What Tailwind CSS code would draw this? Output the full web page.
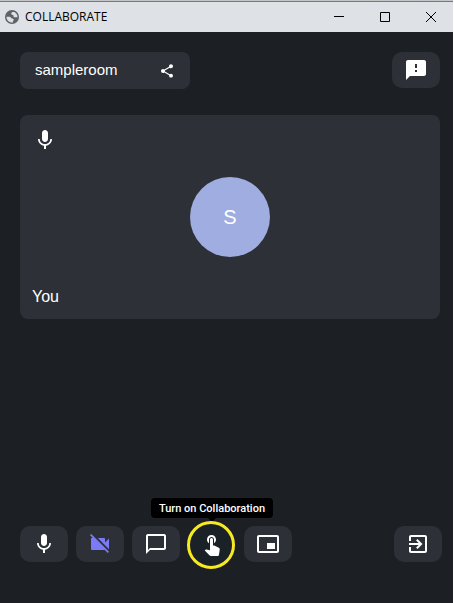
<!DOCTYPE html>
<html lang="en">
<head>
  <meta charset="UTF-8">
  <meta name="viewport" content="width=device-width, initial-scale=1.0">
  <title>COLLABORATE</title>
  <script src="https://cdn.jsdelivr.net/npm/@tailwindcss/browser@4"></script>
</head>
<body class="relative flex min-h-screen flex-col bg-[#1c1f24] font-['Liberation_Sans',Arial,sans-serif] text-white">
  <div class="absolute inset-y-0 right-0 w-px bg-white"></div>

  <!-- Title bar -->
  <header class="flex h-8 items-center border-t border-[#c4c6c8] bg-[#dee1e6] text-black shadow-[inset_0_1px_0_#77797c]">
    <svg class="ml-1 size-4" viewBox="0 0 16 16">
      <circle cx="8" cy="8" r="7" fill="#5f6368"/>
      <path d="M9 2.500C8 3 7.300 3.700 7.300 4.600c0 .900.500 1.300 1.400 1.400.900.100.900.900.900 1.400 0 .600.500.900 1.200.900h2.700c.200-2.300-1.100-4.700-4.500-5.800z" fill="#dee1e6"/>
      <path d="M2.500 7.700c-.100 2.900 1.700 5 4.700 5.800l2-.100c-.600-.500-.500-1.200.100-1.700.700-.600.500-1.700-.400-2-.700-.300-1.300-.100-1.700-.700C6.700 8 5.900 7.700 5 7.700z" fill="#dee1e6"/>
    </svg>
    <h1 class="ml-[5px] flex-1 font-['Open_Sans',sans-serif] text-xs">COLLABORATE</h1>
    <button type="button" aria-label="Minimize" class="flex h-full w-[46px] items-center justify-center">
      <svg class="size-3" viewBox="0 0 12 12" fill="none" stroke="#000"><path d="M1 5.500h10"/></svg>
    </button>
    <button type="button" aria-label="Maximize" class="flex h-full w-[46px] items-center justify-center">
      <svg class="size-3" viewBox="0 0 12 12" fill="none" stroke="#000"><path d="M1.500 1.500h9v9h-9z"/></svg>
    </button>
    <button type="button" aria-label="Close" class="flex h-full w-[46px] items-center justify-center">
      <svg class="size-3" viewBox="0 0 12 12" fill="none" stroke="#000"><path d="M1 1l10 10M11 1L1 11"/></svg>
    </button>
  </header>

  <main class="flex flex-1 flex-col pt-5 pb-[41px] pl-5">
    <div class="flex items-start justify-between pr-3.5">
      <div class="flex h-[37px] w-[170px] items-center justify-between rounded-lg bg-[#2d3036] pr-[15px] pl-[15px]">
        <span class="text-[15px]">sampleroom</span>
        <button type="button" aria-label="Share room">
          <svg class="size-4" viewBox="0 0 24 24" fill="currentColor"><path d="M18 16.080c-.760 0-1.440.300-1.960.770L8.910 12.700c.050-.230.090-.460.090-.700s-.040-.470-.090-.700l7.050-4.110c.540.500 1.250.810 2.040.810 1.660 0 3-1.340 3-3s-1.340-3-3-3-3 1.340-3 3c0 .240.040.470.090.700L8.040 9.810C7.500 9.310 6.790 9 6 9c-1.660 0-3 1.340-3 3s1.340 3 3 3c.790 0 1.500-.310 2.040-.810l7.120 4.160c-.050.210-.080.430-.080.650 0 1.610 1.310 2.920 2.920 2.920s2.920-1.310 2.920-2.920-1.310-2.920-2.920-2.920z"/></svg>
        </button>
      </div>
      <button type="button" aria-label="Send feedback" class="flex h-9 w-12 items-center justify-center rounded-[10px] bg-[#2d3036]">
        <svg class="size-6" viewBox="0 0 24 24" fill="currentColor"><path d="M20 2H4c-1.100 0-1.990.900-1.990 2L2 22l4-4h14c1.100 0 2-.900 2-2V4c0-1.100-.900-2-2-2zm-7 12h-2v-2h2v2zm0-4h-2V6h2v4z"/></svg>
      </button>
    </div>

    <!-- Participant tile -->
    <section class="mt-[26px] mr-3.5 grid h-[204px] grid-rows-[1fr_auto_1fr] rounded-lg bg-[#2d3036]">
      <svg class="mt-[13px] ml-[13px] size-6" viewBox="0 0 24 24" fill="currentColor"><path d="M12 14c1.660 0 2.990-1.340 2.990-3L15 5c0-1.660-1.340-3-3-3S9 3.340 9 5v6c0 1.660 1.340 3 3 3zm5.300-3c0 3-2.540 5.100-5.300 5.100S6.700 14 6.700 11H5c0 3.410 2.720 6.230 6 6.720V21h2v-3.280c3.280-.480 6-3.300 6-6.720h-1.700z"/></svg>
      <div class="flex size-20 items-center justify-center justify-self-center rounded-full bg-[#9fade0] text-xl">S</div>
      <p class="self-end pb-2.5 pl-3 text-base">You</p>
    </section>

    <!-- Call controls -->
    <footer class="mt-auto flex justify-between pr-3">
      <div class="flex gap-2">
        <button type="button" aria-label="Microphone" class="flex h-9 w-12 items-center justify-center rounded-[10px] bg-[#2d3036]">
          <svg class="size-6" viewBox="0 0 24 24" fill="currentColor"><path d="M12 14c1.660 0 2.990-1.340 2.990-3L15 5c0-1.660-1.340-3-3-3S9 3.340 9 5v6c0 1.660 1.340 3 3 3zm5.300-3c0 3-2.540 5.100-5.300 5.100S6.700 14 6.700 11H5c0 3.410 2.720 6.230 6 6.720V21h2v-3.280c3.280-.480 6-3.300 6-6.720h-1.700z"/></svg>
        </button>
        <button type="button" aria-label="Camera" class="flex h-9 w-12 items-center justify-center rounded-[10px] bg-[#2d3036] text-[#7b7bf5]">
          <svg class="size-6" viewBox="0 0 24 24" fill="currentColor"><path d="M21 6.500l-4 4V7c0-.550-.450-1-1-1H9.820L21 17.180V6.500zM3.270 2L2 3.270 4.730 6H4c-.550 0-1 .450-1 1v10c0 .550.450 1 1 1h12c.210 0 .390-.080.540-.180L19.730 21 21 19.730 3.270 2z"/></svg>
        </button>
        <button type="button" aria-label="Chat" class="flex h-9 w-12 items-center justify-center rounded-[10px] bg-[#2d3036]">
          <svg class="size-6" viewBox="0 0 24 24" fill="currentColor"><path d="M20 2H4c-1.100 0-2 .900-2 2v18l4-4h14c1.100 0 2-.900 2-2V4c0-1.100-.900-2-2-2zm0 14H6l-2 2V4h16v12z"/></svg>
        </button>
        <div class="relative">
          <div class="pointer-events-none absolute -top-[5px] -left-px size-12 rounded-full border-3 border-[#f7ea22] bg-[#1a2228]"></div>
          <button type="button" aria-describedby="collab-tip" aria-label="Collaboration" class="relative flex h-9 w-12 items-center justify-center rounded-[10px]">
            <svg class="size-6" viewBox="0 0 24 24" fill="currentColor"><path d="M9 11.240V7.500C9 6.120 10.120 5 11.500 5S14 6.120 14 7.500v3.740c1.210-.810 2-2.180 2-3.740C16 5.010 13.990 3 11.500 3S7 5.010 7 7.500c0 1.560.790 2.930 2 3.740zm9.840 4.630l-4.540-2.260c-.170-.070-.350-.110-.540-.110H13v-6c0-.830-.670-1.500-1.500-1.500S10 6.670 10 7.500v10.740l-3.430-.720c-.080-.010-.150-.030-.240-.030-.310 0-.590.130-.790.330l-.790.800 4.940 4.940c.270.270.650.440 1.060.440h6.790c.750 0 1.330-.550 1.440-1.280l.750-5.270c.010-.070.020-.140.020-.200 0-.620-.380-1.160-.910-1.380z"/></svg>
          </button>
          <div id="collab-tip" role="tooltip" class="absolute bottom-full left-1/2 mb-2 -translate-x-1/2 rounded bg-black px-2 pt-[3px] pb-px font-['Roboto',sans-serif] text-[11px] leading-4 font-medium whitespace-nowrap">
            Turn on Collaboration
            <svg class="absolute top-full left-1/2 h-[3px] w-2 -translate-x-1/2" viewBox="0 0 8 3"><path d="M0 0h8L5 3H3z"/></svg>
          </div>
        </div>
        <button type="button" aria-label="Picture in picture" class="flex h-9 w-12 items-center justify-center rounded-[10px] bg-[#2d3036]">
          <svg class="size-6" viewBox="0 0 24 24" fill="currentColor"><path d="M19 11h-8v6h8v-6zm4 8V4.980C23 3.880 22.100 3 21 3H3c-1.100 0-2 .880-2 1.980V19c0 1.100.900 2 2 2h18c1.100 0 2-.900 2-2zm-2 .020H3V4.970h18v14.050z"/></svg>
        </button>
      </div>
      <button type="button" aria-label="Leave room" class="flex h-9 w-12 items-center justify-center rounded-[10px] bg-[#2d3036]">
        <svg class="size-6" viewBox="0 0 24 24" fill="currentColor"><path d="M10.090 15.590L11.500 17l5-5-5-5-1.410 1.410L12.670 11H3v2h9.670l-2.580 2.590zM19 3H5c-1.110 0-2 .900-2 2v4h2V5h14v14H5v-4H3v4c0 1.100.890 2 2 2h14c1.100 0 2-.900 2-2V5c0-1.100-.900-2-2-2z"/></svg>
      </button>
    </footer>
  </main>
</body>
</html>
